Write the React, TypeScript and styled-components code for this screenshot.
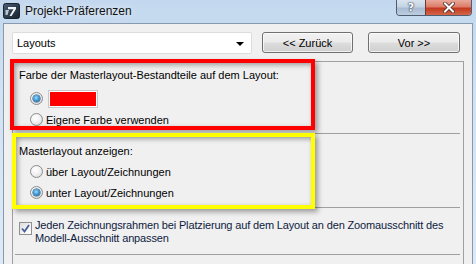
import React from 'react';
import styled, { createGlobalStyle, css } from 'styled-components';

const GlobalStyle = createGlobalStyle`
  html, body {
    margin: 0;
    padding: 0;
    background: #d6e5f5;
  }
  * {
    box-sizing: border-box;
  }
`;

const uiFont = `"Liberation Sans", Arial, sans-serif`;

const Window = styled.div`
  width: 476px;
  height: 264px;
  overflow: hidden;
  display: flex;
  flex-direction: column;
  background: linear-gradient(180deg, #c3d8ee 0%, #d3e3f4 40%, #dde9f6 100%);
  font-family: ${uiFont};
  font-size: 11px;
  color: #000;
`;

const TitleBar = styled.div`
  height: 23px;
  flex: 0 0 23px;
  display: flex;
  align-items: flex-start;
  padding-left: 3px;
`;

const TitleIcon = styled.svg`
  width: 17px;
  height: 16px;
  margin-top: 3px;
  flex: 0 0 auto;
`;

const Title = styled.div`
  margin-left: 5px;
  margin-top: 3px;
  font-size: 12px;
  line-height: 16px;
  color: #111;
  text-shadow: 0 0 6px rgba(255, 255, 255, 0.9);
`;

const Spacer = styled.div`
  flex: 1;
`;

const CaptionButtons = styled.div`
  display: flex;
  margin-right: 4px;
  height: 16px;
  border: 1px solid #4f5d70;
  border-top: none;
  border-radius: 0 0 4px 4px;
  overflow: hidden;
`;

const CaptionButton = styled.div<{ $close?: boolean }>`
  display: flex;
  align-items: center;
  justify-content: center;
  width: ${({ $close }) => ($close ? 46 : 28)}px;
  height: 100%;
  ${({ $close }) =>
    $close
      ? css`
          background: linear-gradient(180deg, #e9a99b 0%, #dc7d68 45%, #c4391d 55%, #d3664a 100%);
          border-left: 1px solid #6b3a33;
        `
      : css`
          background: linear-gradient(180deg, #d9e3ee 0%, #c4d3e3 45%, #a9bcd2 55%, #bccde0 100%);
        `}
`;

const HelpMark = styled.span`
  font-family: "DejaVu Sans", sans-serif;
  font-weight: bold;
  font-size: 11px;
  line-height: 12px;
  color: #fff;
  text-shadow: 0 0 1px #3c4657, 0 0 1px #3c4657, 0 0 2px #3c4657;
`;

const Client = styled.div`
  flex: 1;
  margin: 0 3px 0 3px;
  border: 1px solid #8898ad;
  border-bottom: none;
  background: #f0f0f0;
  display: flex;
  flex-direction: column;
`;

const TopRow = styled.div`
  display: flex;
  align-items: flex-start;
  padding: 8px 0 0 8px;
`;

const Select = styled.div`
  width: 240px;
  height: 22px;
  background: #fff;
  border: 1px solid #dcdcdc;
  border-radius: 2px;
  display: flex;
  align-items: center;
  padding-left: 4px;
  padding-right: 7px;
`;

const SelectText = styled.span`
  flex: 1;
  line-height: 16px;
`;

const Caret = styled.span`
  width: 0;
  height: 0;
  border-left: 4px solid transparent;
  border-right: 4px solid transparent;
  border-top: 4px solid #000;
  margin-top: 1px;
`;

const NavButton = styled.button<{ $gap: number; $w: number }>`
  margin-left: ${({ $gap }) => $gap}px;
  width: ${({ $w }) => $w}px;
  height: 21px;
  padding: 0;
  font-family: ${uiFont};
  font-size: 11px;
  color: #000;
  border: 1px solid #707070;
  border-radius: 3px;
  background: linear-gradient(180deg, #f2f2f2 0%, #ebebeb 48%, #dddddd 52%, #cfcfcf 100%);
  box-shadow: inset 0 0 0 1px rgba(255, 255, 255, 0.7);
`;

const Page = styled.div`
  position: relative;
  width: 452px;
  margin: 7px 0 0 8px;
  flex: 1;
  border: 1px solid #a0a0a0;
  border-bottom: none;
`;

const Section = styled.div<{ $h: number; $pt: number }>`
  position: relative;
  height: ${({ $h }) => $h}px;
  margin: 0 3px 0 2px;
  padding: ${({ $pt }) => $pt}px 0 0 4px;
  border-bottom: 1px solid #a0a0a0;
`;

const GroupLabel = styled.div`
  line-height: 16px;
`;

const Options = styled.div<{ $mt: number }>`
  margin-top: ${({ $mt }) => $mt}px;
  padding-left: 11px;
  display: flex;
  flex-direction: column;
`;

const OptionRow = styled.div`
  height: 21px;
  display: flex;
  align-items: center;
`;

const Radio = styled.span<{ $checked?: boolean }>`
  width: 13px;
  height: 13px;
  border-radius: 50%;
  border: 1px solid #8a8c8e;
  background: radial-gradient(circle at 40% 35%, #ffffff 0%, #f2f2f2 45%, #d2d3d5 100%);
  display: flex;
  align-items: center;
  justify-content: center;
  flex: 0 0 auto;
  &::after {
    content: '';
    display: ${({ $checked }) => ($checked ? 'block' : 'none')};
    width: 7px;
    height: 7px;
    border-radius: 50%;
    background: radial-gradient(circle at 45% 40%, #9ee0ff 0%, #3f9ad8 45%, #1b4d7c 100%);
    box-shadow: 0 0 0 0.5px #24496c;
  }
`;

const OptionText = styled.span`
  margin-left: 3px;
  line-height: 16px;
`;

const Swatch = styled.span`
  width: 48px;
  height: 16px;
  margin-left: 6px;
  background: #ff0000;
  border: 1px solid #fff;
  outline: 1px solid #c8c8c8;
`;

const CheckRow = styled.div`
  display: flex;
  align-items: flex-start;
`;

const CheckBox = styled.span`
  width: 13px;
  height: 13px;
  margin-top: 3px;
  border: 1px solid #8e8f8f;
  background: linear-gradient(135deg, #dcdcdc 0%, #f4f4f4 60%, #ffffff 100%);
  display: flex;
  align-items: center;
  justify-content: center;
  flex: 0 0 auto;
`;

const CheckText = styled.span`
  margin-left: 3px;
  line-height: 13px;
  white-space: nowrap;
  letter-spacing: -0.15px;
  color: #0e1b3f;
`;

const Annotation = styled.div<{ $color: string; $l: number; $t: number; $w: number; $h: number }>`
  position: absolute;
  left: ${({ $l }) => $l}px;
  top: ${({ $t }) => $t}px;
  width: ${({ $w }) => $w}px;
  height: ${({ $h }) => $h}px;
  border: 4px solid ${({ $color }) => $color};
  box-shadow: 3px 3px 5px rgba(0, 0, 0, 0.35), inset 2px 2px 5px rgba(0, 0, 0, 0.35);
  pointer-events: none;
`;

export default function App() {
  return (
    <>
      <GlobalStyle />
      <Window>
        <TitleBar>
          <TitleIcon viewBox="0 0 17 16">
            <defs>
              <linearGradient id="ic" x1="0" y1="0" x2="1" y2="1">
                <stop offset="0" stopColor="#4a5f75" />
                <stop offset="1" stopColor="#15202c" />
              </linearGradient>
            </defs>
            <rect x="0.5" y="0.5" width="16" height="15" rx="2" fill="url(#ic)" stroke="#1a2430" />
            <path d="M5 4 H13 V6 L8.5 13 H6.5 L10.5 6.2 H5 Z" fill="#f2f5f8" />
            <path d="M2.5 7 L6 7 L4.5 12 L2.5 12 Z" fill="#b9c6d4" />
          </TitleIcon>
          <Title>Projekt-Präferenzen</Title>
          <Spacer />
          <CaptionButtons>
            <CaptionButton>
              <HelpMark>?</HelpMark>
            </CaptionButton>
            <CaptionButton $close>
              <svg width="12" height="11" viewBox="0 0 12 11">
                <path d="M2 1.5 L10 9.5 M10 1.5 L2 9.5" stroke="#4a2a24" strokeWidth="3.6" strokeLinecap="square" />
                <path d="M2 1.5 L10 9.5 M10 1.5 L2 9.5" stroke="#fff" strokeWidth="2" strokeLinecap="square" />
              </svg>
            </CaptionButton>
          </CaptionButtons>
        </TitleBar>
        <Client>
          <TopRow>
            <Select>
              <SelectText>Layouts</SelectText>
              <Caret />
            </Select>
            <NavButton $gap={10} $w={91}>&lt;&lt; Zurück</NavButton>
            <NavButton $gap={15} $w={92}>Vor &gt;&gt;</NavButton>
          </TopRow>
          <Page>
            <Section $h={72} $pt={5}>
              <GroupLabel>Farbe der Masterlayout-Bestandteile auf dem Layout:</GroupLabel>
              <Options $mt={5}>
                <OptionRow>
                  <Radio $checked />
                  <Swatch />
                </OptionRow>
                <OptionRow>
                  <Radio />
                  <OptionText>Eigene Farbe verwenden</OptionText>
                </OptionRow>
              </Options>
              <Annotation $color="#ff0000" $l={-5} $t={-3} $w={305} $h={71} />
            </Section>
            <Section $h={74} $pt={9}>
              <GroupLabel>Masterlayout anzeigen:</GroupLabel>
              <Options $mt={2}>
                <OptionRow>
                  <Radio />
                  <OptionText>über Layout/Zeichnungen</OptionText>
                </OptionRow>
                <OptionRow>
                  <Radio $checked />
                  <OptionText>unter Layout/Zeichnungen</OptionText>
                </OptionRow>
              </Options>
              <Annotation $color="#ffff00" $l={-3} $t={-1} $w={303} $h={76} />
            </Section>
            <Section $h={47} $pt={11}>
              <CheckRow>
                <CheckBox>
                  <svg width="9" height="9" viewBox="0 0 9 9">
                    <path d="M1 4.5 L3.5 7.5 L8 1" fill="none" stroke="#4b5e97" strokeWidth="1.8" />
                  </svg>
                </CheckBox>
                <CheckText>
                  Jeden Zeichnungsrahmen bei Platzierung auf dem Layout an den Zoomausschnitt des
                  <br />
                  Modell-Ausschnitt anpassen
                </CheckText>
              </CheckRow>
            </Section>
          </Page>
        </Client>
      </Window>
    </>
  );
}
